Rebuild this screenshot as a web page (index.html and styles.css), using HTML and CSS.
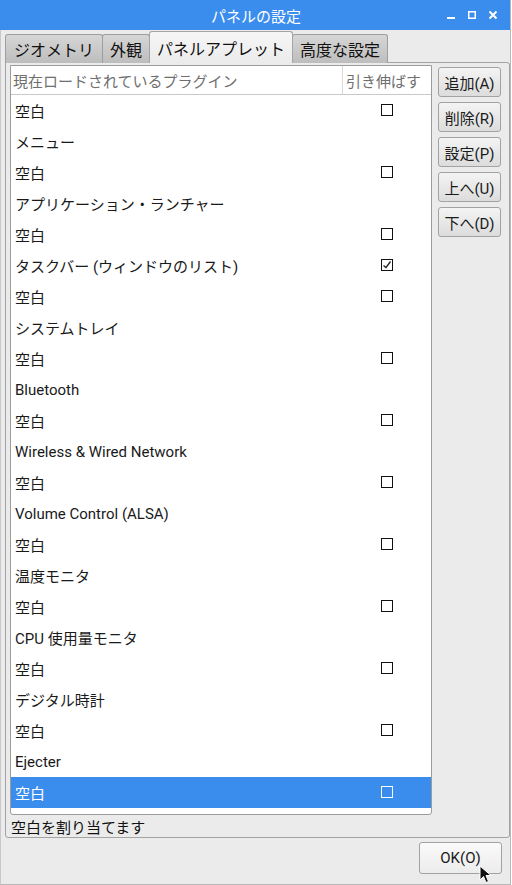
FILE: index.html
```html
<!DOCTYPE html>
<html lang="ja">
<head>
<meta charset="utf-8">
<link rel="stylesheet" href="styles.css">
</head>
<body>
<div class="window">
  <div class="titlebar">
    <div class="title">パネルの設定</div>
    <div class="controls">
      <svg class="ctl" width="12" height="12" viewBox="0 0 12 12"><rect x="2" y="8" width="8" height="2" fill="#fff"/></svg>
      <svg class="ctl" width="12" height="12" viewBox="0 0 12 12"><rect x="2.75" y="2.75" width="6.5" height="6.5" fill="none" stroke="#fff" stroke-width="1.5"/></svg>
      <svg class="ctl" width="12" height="12" viewBox="0 0 12 12"><path d="M2.5 2.5 L9.5 9.5 M9.5 2.5 L2.5 9.5" stroke="#fff" stroke-width="2"/></svg>
    </div>
  </div>
  <div class="content">
    <div class="tabs">
      <div class="tab">ジオメトリ</div>
      <div class="tab">外観</div>
      <div class="tab active">パネルアプレット</div>
      <div class="tab">高度な設定</div>
    </div>
    <div class="notebook">
      <div class="main">
        <div class="list">
          <div class="lhead">
            <div class="hname">現在ロードされているプラグイン</div>
            <div class="hstretch">引き伸ばす</div>
          </div>
          <div class="rows">
            <div class="row"><span class="name">空白</span><span class="cb"></span></div>
            <div class="row"><span class="name">メニュー</span></div>
            <div class="row"><span class="name">空白</span><span class="cb"></span></div>
            <div class="row"><span class="name">アプリケーション・ランチャー</span></div>
            <div class="row"><span class="name">空白</span><span class="cb"></span></div>
            <div class="row"><span class="name">タスクバー (ウィンドウのリスト)</span><span class="cb checked"><svg width="10" height="10" viewBox="0 0 10 10"><path d="M1.5 5.5 L4 7.5 L8.5 1.5" fill="none" stroke="#222" stroke-width="1.3"/></svg></span></div>
            <div class="row"><span class="name">空白</span><span class="cb"></span></div>
            <div class="row"><span class="name">システムトレイ</span></div>
            <div class="row"><span class="name">空白</span><span class="cb"></span></div>
            <div class="row"><span class="name">Bluetooth</span></div>
            <div class="row"><span class="name">空白</span><span class="cb"></span></div>
            <div class="row"><span class="name">Wireless &amp; Wired Network</span></div>
            <div class="row"><span class="name">空白</span><span class="cb"></span></div>
            <div class="row"><span class="name">Volume Control (ALSA)</span></div>
            <div class="row"><span class="name">空白</span><span class="cb"></span></div>
            <div class="row"><span class="name">温度モニタ</span></div>
            <div class="row"><span class="name">空白</span><span class="cb"></span></div>
            <div class="row"><span class="name">CPU 使用量モニタ</span></div>
            <div class="row"><span class="name">空白</span><span class="cb"></span></div>
            <div class="row"><span class="name">デジタル時計</span></div>
            <div class="row"><span class="name">空白</span><span class="cb"></span></div>
            <div class="row"><span class="name">Ejecter</span></div>
            <div class="row selected"><span class="name">空白</span><span class="cb"></span></div>
          </div>
        </div>
        <div class="buttons">
          <div class="btn">追加(A)</div>
          <div class="btn">削除(R)</div>
          <div class="btn">設定(P)</div>
          <div class="btn">上へ(U)</div>
          <div class="btn">下へ(D)</div>
        </div>
      </div>
      <div class="status">空白を割り当てます</div>
    </div>
    <div class="footer">
      <div class="btn ok">OK(O)</div>
    </div>
  </div>
  <svg class="cursor" width="14" height="20" viewBox="0 0 14 20"><path d="M1 1 L1 15 L4.5 11.5 L7 17.5 L9.5 16.5 L7 10.5 L12 10.5 Z" fill="#111" stroke="#fff" stroke-width="1"/></svg>
</div>
</body>
</html>
```

FILE: styles.css
```css
html, body {
  margin: 0;
  padding: 0;
  background: #ffffff;
}
body {
  font-family: Roboto, "Noto Sans CJK JP", sans-serif;
  font-size: 15px;
  color: #1a1a1a;
}
.window {
  position: relative;
  width: 511px;
  height: 885px;
  display: flex;
  flex-direction: column;
  background: #ebebeb;
  border-right: 1px solid #b8b8b8;
  box-sizing: border-box;
}
.titlebar {
  height: 30px;
  flex: none;
  background: #3b8ded;
  color: #fff;
  display: flex;
  align-items: center;
  justify-content: center;
  position: relative;
}
.title {
  font-size: 15px;
  margin-left: 2px;
}
.controls {
  position: absolute;
  right: 11px;
  top: 9px;
  display: flex;
  gap: 9px;
}
.ctl { display: block; }
.content {
  flex: 1;
  display: flex;
  flex-direction: column;
  padding: 2px 0 0 4px;
  border-left: 1px solid #c8c8c8;
  border-bottom: 1px solid #b8b8b8;
  box-sizing: border-box;
}
.tabs {
  display: flex;
  align-items: flex-end;
  height: 31px;
  position: relative;
  z-index: 1;
  margin-bottom: -1px;
}
.tab {
  height: 29px;
  box-sizing: border-box;
  padding: 0 7px;
  display: flex;
  align-items: center;
  border: 1px solid #9e9e9e;
  border-bottom: none;
  border-radius: 3px 3px 0 0;
  background: linear-gradient(#d6d6d6, #bdbdbd);
  font-size: 16px;
  color: #111;
  margin-right: -1px;
}
.tab:first-child { padding: 0 8px; }
.tab.active {
  height: 32px;
  background: linear-gradient(#f6f6f6, #ebebeb);
  padding: 0 7px;
  border-color: #a4a4a4;
  position: relative;
  z-index: 2;
}
.notebook {
  width: 505px;
  height: 776px;
  box-sizing: border-box;
  border: 1px solid #a3a3a3;
  border-radius: 0 3px 3px 3px;
  background: #ebebeb;
  padding: 2px 6px 0 4px;
  display: flex;
  flex-direction: column;
}
.main {
  display: flex;
  gap: 6px;
}
.list {
  width: 422px;
  height: 750px;
  box-sizing: border-box;
  border: 1px solid #9c9c9c;
  border-radius: 0 0 3px 3px;
  background: #fff;
  display: flex;
  flex-direction: column;
}
.lhead {
  height: 28px;
  flex: none;
  display: flex;
  border-bottom: 1px solid #c9c9c9;
  color: #6f6f6f;
  font-size: 15px;
}
.hname {
  width: 329px;
  padding-left: 2px;
  display: flex;
  align-items: center;
  border-right: 1px solid #d8d8d8;
}
.hstretch {
  flex: 1;
  display: flex;
  align-items: center;
  padding-left: 3px;
}
.row {
  height: 31px;
  display: flex;
  align-items: center;
  position: relative;
  padding-left: 4px;
}
.row .name { flex: 1; }
.row.selected {
  background: #3b8ded;
  color: #fff;
}
.cb {
  width: 12px;
  height: 12px;
  box-sizing: border-box;
  border: 1px solid #111;
  position: absolute;
  left: 370px;
  top: 9px;
  display: flex;
  align-items: center;
  justify-content: center;
}
.row.selected .cb { border-color: #fff; }
.buttons {
  display: flex;
  flex-direction: column;
  gap: 5px;
  padding-top: 2px;
}
.btn {
  width: 63px;
  height: 30px;
  box-sizing: border-box;
  border: 1px solid #a2a2a2;
  border-radius: 3px;
  background: linear-gradient(#f4f4f4, #dcdcdc);
  display: flex;
  align-items: center;
  justify-content: center;
  font-size: 15px;
  color: #1a1a1a;
}
.status {
  padding-left: 1px;
  height: 22px;
  display: flex;
  align-items: center;
  font-size: 15px;
  color: #111;
}
.footer {
  display: flex;
  justify-content: flex-end;
  padding: 4px 8px 0 0;
}
.btn.ok {
  width: 83px;
  height: 32px;
  background: linear-gradient(#fafafa, #ececec);
}
.cursor {
  position: absolute;
  left: 479px;
  top: 865px;
}
```
